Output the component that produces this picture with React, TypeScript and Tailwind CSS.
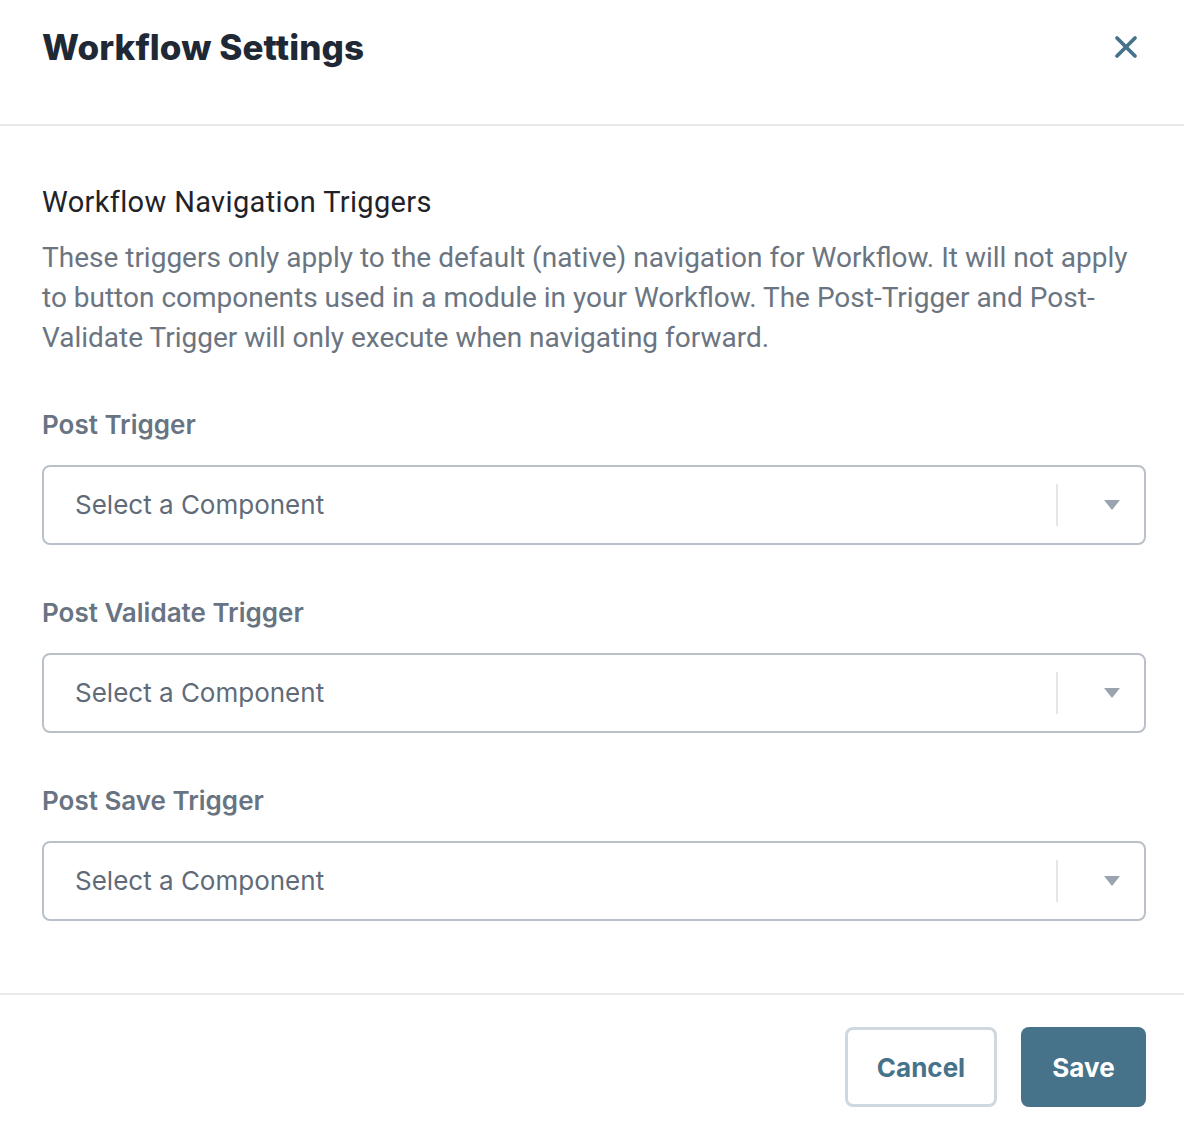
import { X } from "lucide-react";

const triggers = ["Post Trigger", "Post Validate Trigger", "Post Save Trigger"];

function ComponentSelect() {
  return (
    <div className="flex h-[80px] items-center rounded-[8px] border-2 border-[#b9c0c7] bg-white">
      <span className="flex-1 pb-[2px] pl-[31px] text-[26px] text-[#5f6b78] [font-family:Inter,sans-serif]">
        Select a Component
      </span>
      <span className="h-[42px] w-[2px] bg-[#e3e7eb]" />
      <span className="flex w-[86px] items-center justify-end pr-[24px]">
        <svg width="16" height="11" viewBox="0 0 16 11">
          <path d="M0 0 H16 L8 10 Z" fill="#9aa4af" />
        </svg>
      </span>
    </div>
  );
}

export default function App() {
  return (
    <div className="flex min-h-[1128px] w-[1184px] flex-col bg-white">
      <div className="flex h-[126px] items-start justify-between border-b-2 border-[#e8ebee] pl-[42px] pr-[40px] pt-[25px]">
        <h1 className="text-[35px] font-extrabold leading-[44px] tracking-[0.1px] text-[#1f2935] [font-family:Inter,sans-serif]">
          Workflow Settings
        </h1>
        <button className="mt-[4px] text-[#46728a]">
          <X size={36} strokeWidth={2.5} />
        </button>
      </div>

      <div className="flex-1 pl-[42px] pr-[38px] pt-[56px] pb-[72px]">
        <h2 className="text-[29px] leading-[40px] tracking-[0.35px] text-[#1f2328] [font-family:Roboto,sans-serif]">
          Workflow Navigation Triggers
        </h2>
        <p className="mt-[16px] text-[28px] leading-[40px] text-[#6b7581] [font-family:Roboto,sans-serif]">
          These triggers only apply to the default (native) navigation for Workflow. It will not apply to button
          components used in a module in your Workflow. The Post-Trigger and Post-Validate Trigger will only execute
          when navigating forward.
        </p>

        <div className="mt-[49px] flex flex-col gap-[50px]">
          {triggers.map((t) => (
            <div key={t}>
              <label className="block text-[26px] font-semibold leading-[36px] text-[#687482] [font-family:Inter,sans-serif]">
                {t}
              </label>
              <div className="mt-[22px]">
                <ComponentSelect />
              </div>
            </div>
          ))}
        </div>
      </div>

      <div className="flex justify-end gap-[24px] border-t-2 border-[#e8ebee] px-[38px] pt-[32px] pb-[21px]">
        <button className="h-[80px] w-[152px] rounded-[8px] border-[3px] border-[#cfd8de] bg-white text-[26px] font-bold text-[#46728a] [font-family:Inter,sans-serif]">
          Cancel
        </button>
        <button className="h-[80px] w-[125px] rounded-[8px] bg-[#467389] text-[26px] font-bold text-white [font-family:Inter,sans-serif]">
          Save
        </button>
      </div>
    </div>
  );
}
